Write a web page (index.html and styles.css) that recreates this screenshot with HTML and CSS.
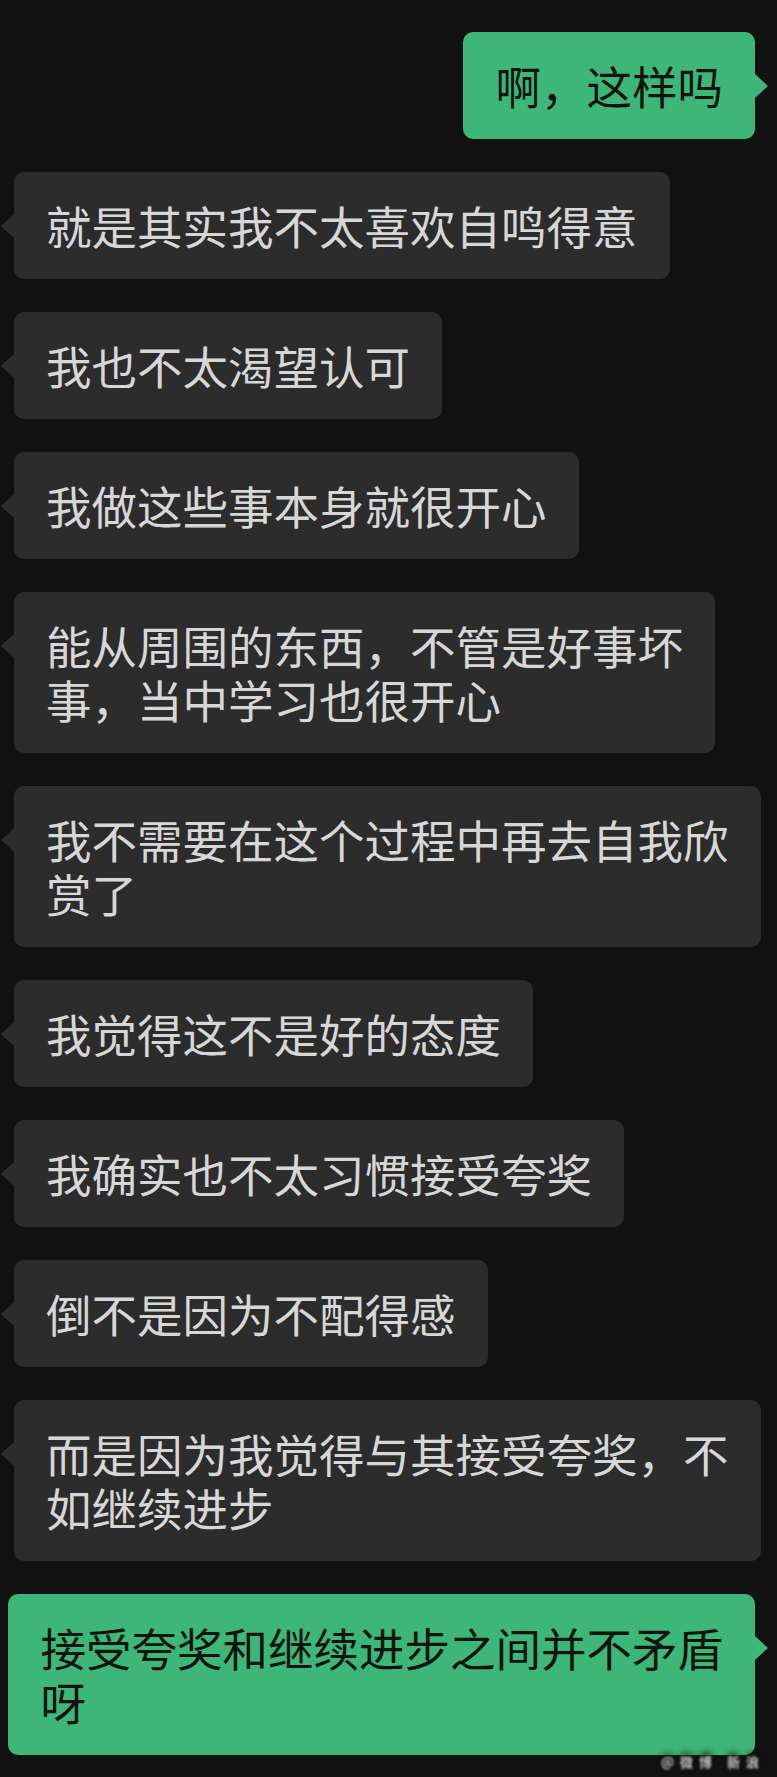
FILE: index.html
```html
<!DOCTYPE html>
<html lang="zh-CN">
<head>
  <meta charset="UTF-8" />
  <meta name="viewport" content="width=device-width, initial-scale=1.0"/>
  <title>聊天记录</title>
  <link rel="stylesheet" href="styles.css">
</head>
<body>
  <main class="chat">
    <!-- 我发的 -->
    <div class="row mine">
      <div class="bubble">啊，这样吗</div>
    </div>

    <!-- 对方 -->
    <div class="row theirs">
      <div class="bubble">就是其实我不太喜欢自鸣得意</div>
    </div>
    <div class="row theirs">
      <div class="bubble">我也不太渴望认可</div>
    </div>
    <div class="row theirs">
      <div class="bubble">我做这些事本身就很开心</div>
    </div>
    <div class="row theirs">
      <div class="bubble">能从周围的东西，不管是好事坏<br>事，当中学习也很开心</div>
    </div>
    <div class="row theirs">
      <div class="bubble">我不需要在这个过程中再去自我欣<br>赏了</div>
    </div>
    <div class="row theirs">
      <div class="bubble">我觉得这不是好的态度</div>
    </div>
    <div class="row theirs">
      <div class="bubble">我确实也不太习惯接受夸奖</div>
    </div>
    <div class="row theirs">
      <div class="bubble">倒不是因为不配得感</div>
    </div>
    <div class="row theirs">
      <div class="bubble">而是因为我觉得与其接受夸奖，不<br>如继续进步</div>
    </div>

    <div class="row mine">
      <div class="bubble">接受夸奖和继续进步之间并不矛盾<br>呀</div>
    </div>
  </main>

  <div class="watermark">@微博 新浪</div>
</body>
</html>
```

FILE: styles.css
```css
body {
  margin: 0;
  padding: 0;
  background: #111111;
  font-family: "Noto Sans CJK SC", "Noto Sans", sans-serif;
  position: relative;
  min-height: 1777px;
}
.chat {
  display: flex;
  flex-direction: column;
  gap: 33px;
  padding: 32px 22px 24px 14px;
}
.row {
  display: flex;
}
.row.mine {
  justify-content: flex-end;
}
.bubble {
  position: relative;
  flex-shrink: 0;
  white-space: nowrap;
  font-size: 45.5px;
  line-height: 54px;
  padding: 26px 32px 27px;
  border-radius: 10px;
}
.theirs .bubble {
  background: #2c2c2c;
  color: #d7d7d7;
}
.mine .bubble {
  background: #3eb677;
  color: #101410;
}
/* 小三角 */
.bubble::before {
  content: "";
  position: absolute;
  top: 42px;
  border-top: 12px solid transparent;
  border-bottom: 12px solid transparent;
}
.theirs .bubble::before {
  left: -13px;
  border-right: 13px solid #2c2c2c;
}
.mine .bubble::before {
  right: -13px;
  border-left: 13px solid #3eb677;
}
.watermark {
  position: absolute;
  right: 12px;
  bottom: 8px;
  font-size: 13px;
  font-weight: bold;
  color: rgba(255, 255, 255, 0.75);
  letter-spacing: 6px;
  filter: blur(1px);
  text-shadow: 0 -4px 6px #111;
}
```
